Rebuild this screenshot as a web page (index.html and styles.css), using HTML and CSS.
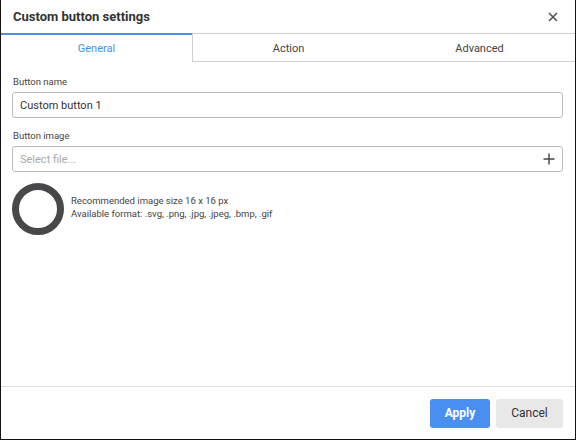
FILE: index.html
```html
<!DOCTYPE html>
<html lang="en">
<head>
    <meta charset="UTF-8">
    <title>Custom button settings</title>
    <link rel="stylesheet" href="styles.css">
</head>
<body>
    <div class="dialog">
        <div class="dialog-header">
            <span class="dialog-title">Custom button settings</span>
            <span class="close-button">
                <svg width="10" height="10" viewBox="0 0 10 10">
                    <path d="M1 1 L9 9 M9 1 L1 9" stroke="#555" stroke-width="1.6" fill="none"/>
                </svg>
            </span>
        </div>
        <div class="tabs">
            <div class="tab active">General</div>
            <div class="tab after-active">Action</div>
            <div class="tab">Advanced</div>
        </div>
        <div class="dialog-body">
            <div class="field-label">Button name</div>
            <div class="text-input">Custom button 1</div>
            <div class="field-label">Button image</div>
            <div class="text-input file-input">
                <span class="placeholder">Select file...</span>
                <svg width="12" height="12" viewBox="0 0 12 12">
                    <path d="M6 0.5 V11.5 M0.5 6 H11.5" stroke="#444" stroke-width="1.4" fill="none"/>
                </svg>
            </div>
            <div class="image-preview">
                <svg width="52" height="52" viewBox="0 0 52 52">
                    <circle cx="26" cy="26" r="22.5" stroke="#48484a" stroke-width="7" fill="none"/>
                </svg>
                <div class="image-hint">
                    <div>Recommended image size 16 x 16 px</div>
                    <div>Available format: .svg, .png, .jpg, .jpeg, .bmp, .gif</div>
                </div>
            </div>
        </div>
        <div class="dialog-footer">
            <button class="btn btn-primary">Apply</button>
            <button class="btn btn-secondary">Cancel</button>
        </div>
    </div>
</body>
</html>
```

FILE: styles.css
```css
body {
    margin: 0;
    font-family: Roboto, "Liberation Sans", Arial, sans-serif;
    background-color: #ffffff;
}
.dialog {
    width: 576px;
    height: 440px;
    box-sizing: border-box;
    border-left: 1px solid #111;
    border-right: 1px solid #111;
    border-bottom: 1px solid #111;
    display: flex;
    flex-direction: column;
    background-color: #fff;
}
.dialog-header {
    height: 33px;
    display: flex;
    align-items: center;
    justify-content: space-between;
    padding: 0 17px 0 12px;
}
.dialog-title {
    font-size: 13px;
    font-weight: bold;
    color: #333;
}
.close-button {
    display: flex;
    width: 10px;
    height: 10px;
}
.tabs {
    display: flex;
    height: 29px;
}
.tab {
    flex: 1;
    display: flex;
    align-items: center;
    justify-content: center;
    padding-top: 1px;
    font-size: 11px;
    color: #444;
    border-top: 1px solid #d0d0d0;
    border-bottom: 1px solid #d0d0d0;
}
.tab.active {
    color: #4a90e2;
    border-top: 2px solid #4a90e2;
    border-bottom: 1px solid transparent;
}
.tab.after-active {
    border-left: 1px solid #d0d0d0;
}
.dialog-body {
    flex: 1;
    padding: 14px 12px 0 11px;
}
.field-label {
    font-size: 9.5px;
    color: #444;
    padding-left: 1px;
    margin-bottom: 5px;
}
.text-input {
    height: 24px;
    border: 1px solid #bdbdbd;
    border-radius: 3px;
    padding: 0 7px;
    display: flex;
    align-items: center;
    font-size: 11px;
    color: #333;
    margin-bottom: 12px;
}
.file-input {
    justify-content: space-between;
    padding-right: 7px;
}
.placeholder {
    color: #aaa;
}
.image-preview {
    display: flex;
    align-items: center;
    gap: 7px;
    margin-top: -1px;
}
.image-hint {
    font-size: 9.5px;
    color: #444;
    line-height: 13px;
    margin-top: -4px;
}
.dialog-footer {
    height: 52px;
    border-top: 1px solid #dcdcdc;
    display: flex;
    align-items: center;
    justify-content: flex-end;
    gap: 6px;
    padding-right: 12px;
}
.btn {
    height: 29px;
    border: none;
    border-radius: 3px;
    font-family: Roboto, "Liberation Sans", Arial, sans-serif;
    font-size: 12px;
    cursor: pointer;
}
.btn-primary {
    width: 60px;
    background-color: #4a8ef0;
    color: #fff;
    font-weight: bold;
}
.btn-secondary {
    width: 67px;
    background-color: #e8e8e8;
    color: #333;
}
```
